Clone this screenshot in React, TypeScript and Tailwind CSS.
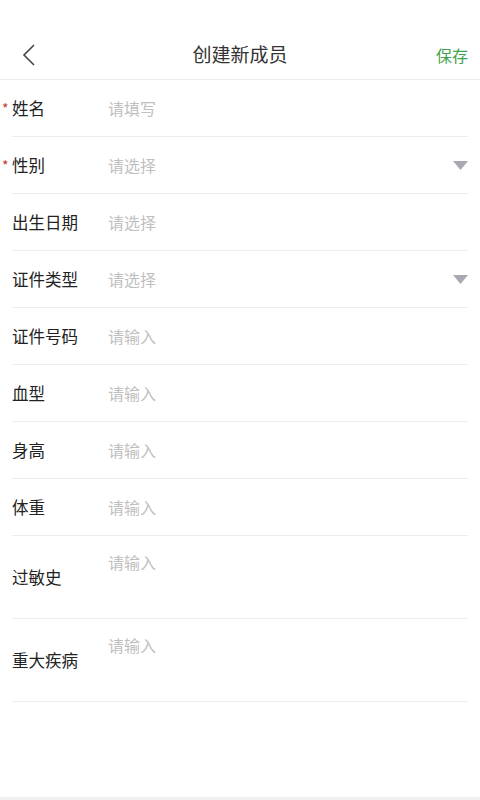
import React from 'react';

const font = { fontFamily: '"Noto Sans CJK SC", "Noto Sans", sans-serif' };

type Field = { label: string; placeholder: string; required?: boolean; select?: boolean; multi?: boolean };

const fields: Field[] = [
  { label: '姓名', placeholder: '请填写', required: true },
  { label: '性别', placeholder: '请选择', required: true, select: true },
  { label: '出生日期', placeholder: '请选择' },
  { label: '证件类型', placeholder: '请选择', select: true },
  { label: '证件号码', placeholder: '请输入' },
  { label: '血型', placeholder: '请输入' },
  { label: '身高', placeholder: '请输入' },
  { label: '体重', placeholder: '请输入' },
  { label: '过敏史', placeholder: '请输入', multi: true },
  { label: '重大疾病', placeholder: '请输入', multi: true },
];

const Row: React.FC<{ f: Field }> = ({ f }) => (
  <div className={`relative ml-3 mr-3 flex items-center border-b border-[#ececec] ${f.multi ? 'h-[83px]' : 'h-[57px]'}`}>
    {f.required && <span className="absolute left-[-10px] top-[21px] text-[14px] leading-none text-[#c0392b]">*</span>}
    <span className="w-[96px] text-[16.5px] leading-none text-[#222]">{f.label}</span>
    {f.multi ? (
      <span className="self-start pt-[18px] text-[16px] leading-none text-[#c0c0c0]">{f.placeholder}</span>
    ) : (
      <span className="text-[16px] leading-none text-[#c0c0c0]">{f.placeholder}</span>
    )}
    {f.select && (
      <svg className="ml-auto" width="15" height="9" viewBox="0 0 15 9">
        <polygon points="0,0 15,0 7.5,9" fill="#a7a8b1" />
      </svg>
    )}
  </div>
);

export default function App() {
  return (
    <div style={font} className="flex h-[800px] w-[480px] flex-col bg-white">
      <header className="flex h-[80px] items-center border-b border-[#ececec] px-3 pt-[30px]">
        <div className="flex w-[60px] items-center pl-[10px]">
          <svg width="14" height="22" viewBox="0 0 14 22" fill="none">
            <path d="M12 1 L2 11 L12 21" stroke="#444" strokeWidth="1.6" />
          </svg>
        </div>
        <h1 className="flex-1 text-center text-[19px] text-[#333]">创建新成员</h1>
        <button className="w-[60px] text-right text-[16px] text-[#3fa34d]">保存</button>
      </header>
      <main className="flex-1">
        {fields.map((f) => (
          <Row key={f.label} f={f} />
        ))}
      </main>
      <div className="h-[3px] bg-[#f0f0f0]" />
    </div>
  );
}
